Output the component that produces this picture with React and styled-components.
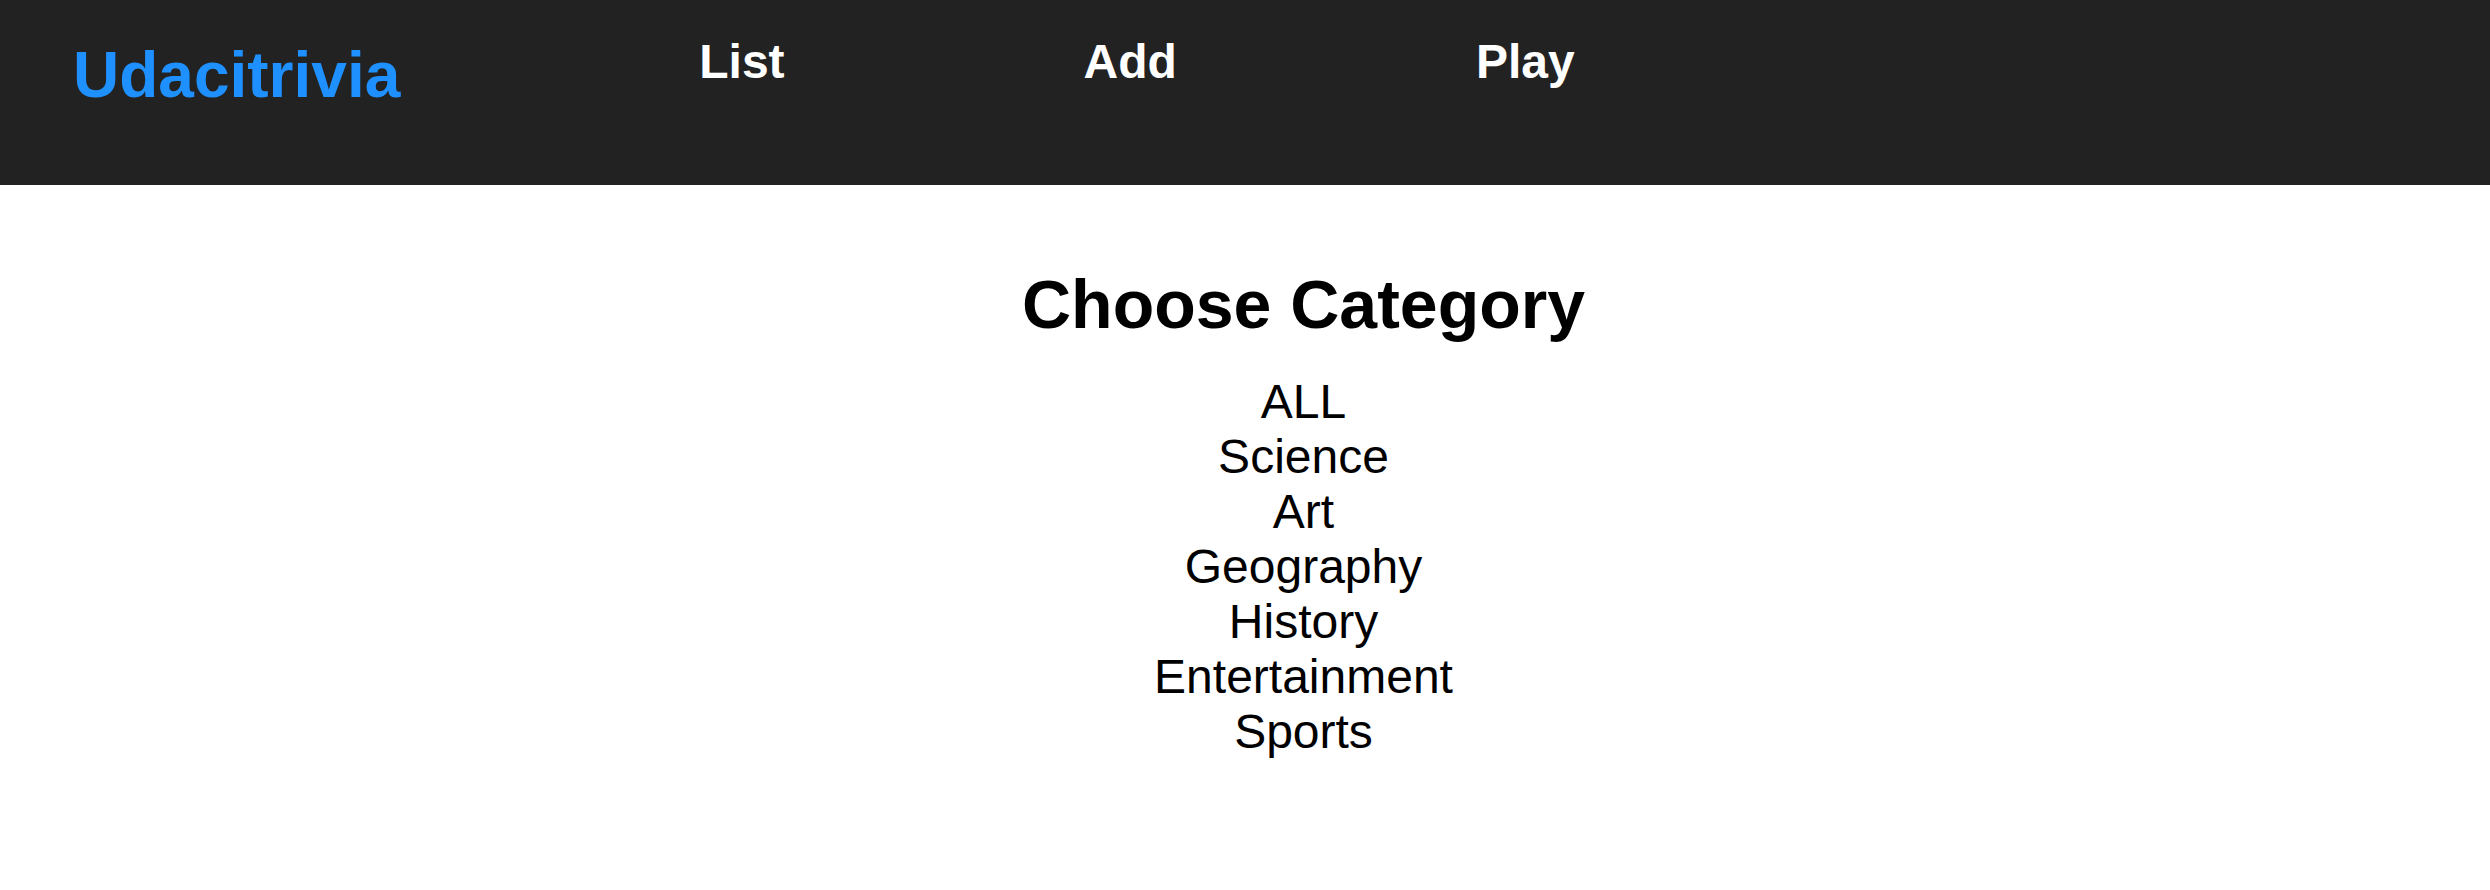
import React from 'react';
import styled, { createGlobalStyle } from 'styled-components';

const GlobalStyle = createGlobalStyle`
  body {
    margin: 0;
    background-color: #fff;
    font-family: "Liberation Sans", Arial, sans-serif;
  }
`;

const Header = styled.header`
  display: flex;
  align-items: flex-start;
  gap: 299px;
  height: 185px;
  box-sizing: border-box;
  padding: 38px 0 0 73px;
  background-color: #222;
`;

const Brand = styled.h1`
  margin: 5px 0 0;
  font-size: 64px;
  line-height: 1;
  font-weight: bold;
  color: #1e90ff;
  cursor: pointer;
`;

const NavItem = styled.h2`
  margin: 0;
  font-size: 48px;
  line-height: 1;
  font-weight: bold;
  color: #fff;
  cursor: pointer;
`;

const Main = styled.main`
  padding: 80px 0 0 117px;
  text-align: center;
`;

const Title = styled.h2`
  margin: 0 0 31px;
  font-size: 68px;
  font-weight: bold;
  color: #000;
`;

const CategoryList = styled.div`
  display: flex;
  flex-direction: column;
  align-items: center;
`;

const Category = styled.div`
  font-size: 48px;
  color: #000;
  cursor: pointer;
`;

const categories = ['ALL', 'Science', 'Art', 'Geography', 'History', 'Entertainment', 'Sports'];

export default function App() {
  return (
    <>
      <GlobalStyle />
      <Header>
        <Brand>Udacitrivia</Brand>
        <NavItem>List</NavItem>
        <NavItem>Add</NavItem>
        <NavItem>Play</NavItem>
      </Header>
      <Main>
        <Title>Choose Category</Title>
        <CategoryList>
          {categories.map((c) => (
            <Category key={c}>{c}</Category>
          ))}
        </CategoryList>
      </Main>
    </>
  );
}
